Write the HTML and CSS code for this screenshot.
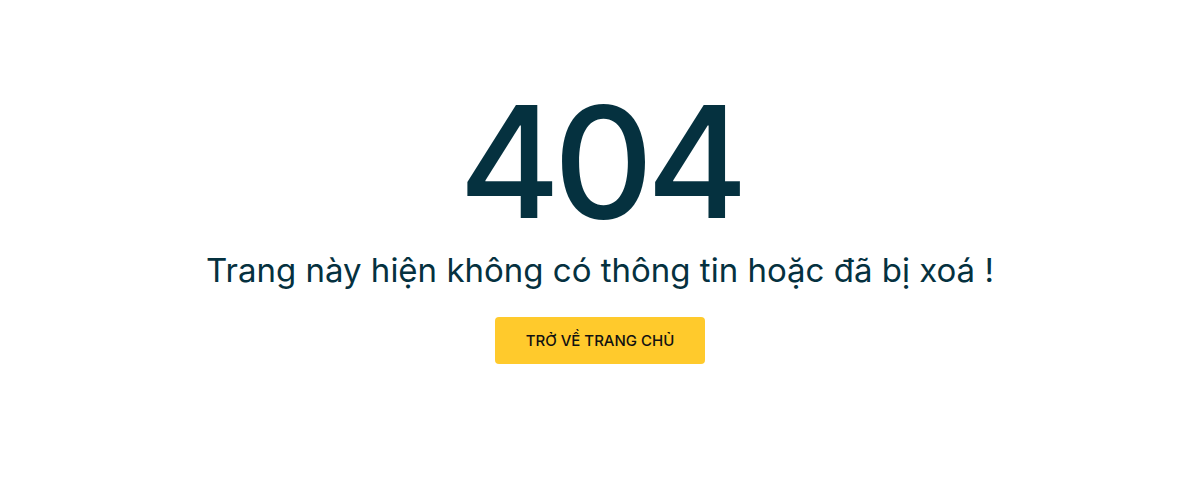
FILE: index.html
```html
<!DOCTYPE html>
<html lang="vi">
<head>
<meta charset="utf-8">
<link rel="stylesheet" href="styles.css">
</head>
<body>
<main class="page">
  <h1 class="code">404</h1>
  <p class="message">Trang này hiện không có thông tin hoặc đã bị xoá !</p>
  <a class="home-btn" href="#">TRỞ VỀ TRANG CHỦ</a>
</main>
</body>
</html>
```
FILE: styles.css
```css
* { box-sizing: border-box; }
html, body { margin: 0; padding: 0; background: #fff; }
body { font-family: "Inter", "Lato", sans-serif; color: #05313f; }
.page {
  display: flex;
  flex-direction: column;
  align-items: center;
  padding-top: 78px;
}
.code {
  margin: 0;
  font-size: 155px;
  font-weight: 500;
  line-height: 168px;
  letter-spacing: -7px;
  color: #05313f;
}
.message {
  margin: 4px 0 0;
  font-size: 33px;
  font-weight: 400;
  line-height: 40px;
  color: #05313f;
}
.home-btn {
  margin-top: 27px;
  display: flex;
  align-items: center;
  justify-content: center;
  width: 210px;
  height: 47px;
  background: #ffca2c;
  border-radius: 4px;
  color: #111;
  font-size: 15px;
  font-weight: 500;
  text-decoration: none;
}
```
